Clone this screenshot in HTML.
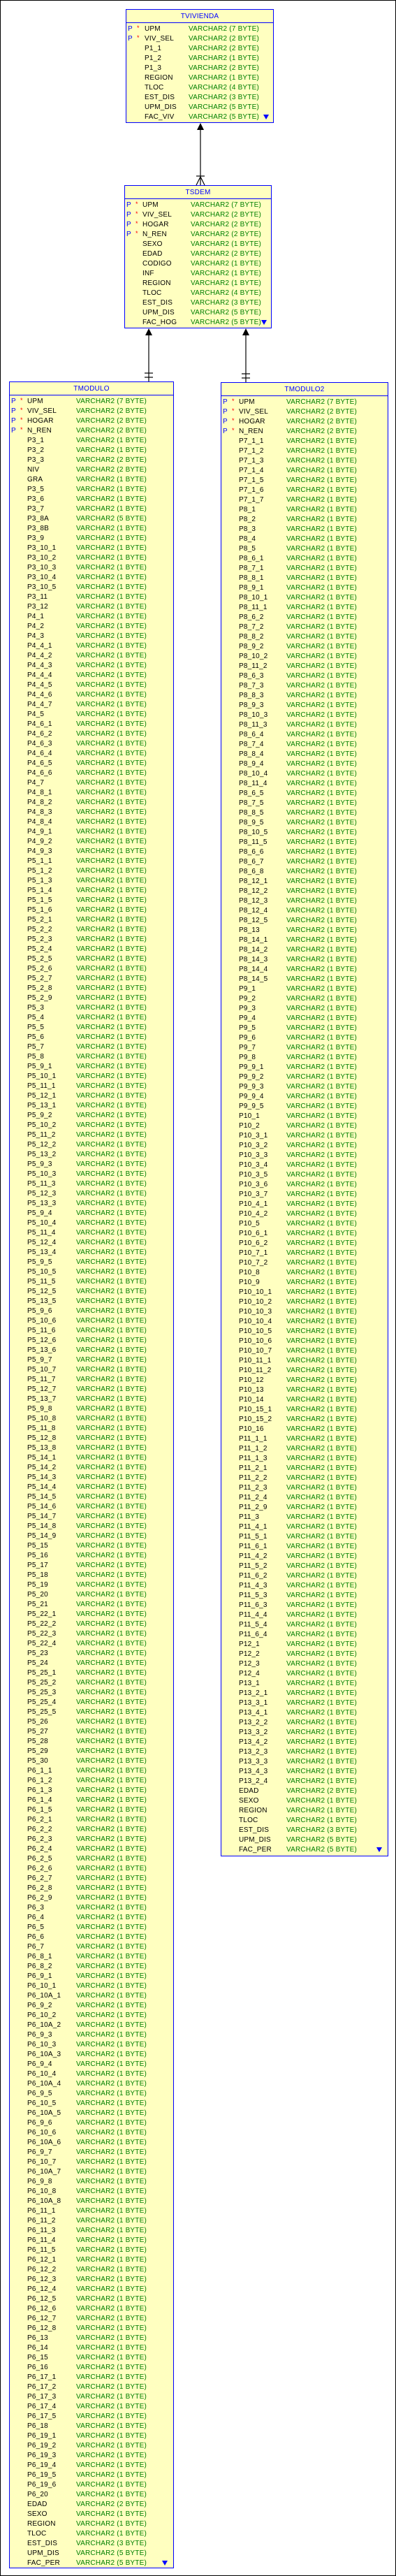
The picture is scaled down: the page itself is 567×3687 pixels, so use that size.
<!DOCTYPE html>
<html><head><meta charset="utf-8">
<style>
html,body{margin:0;padding:0;background:#fff}
body{width:567px;height:3687px;position:relative;overflow:hidden}
.fr{position:absolute;left:0;top:0;width:565px;height:3685px;border:1px solid #000}
.t{position:absolute;background:#ffffc0;border:1px solid #0000ff;font:10px "Liberation Sans",Arial,sans-serif;letter-spacing:.2px;box-sizing:border-box}
.h{height:18px;line-height:19px;text-align:center;color:#0000ff;border-bottom:1px solid #0000ff;margin-bottom:2px}
.t p{margin:0;height:14px;line-height:14px;position:relative;padding-left:25px;color:#008000;white-space:nowrap}
.t p s{text-decoration:none;color:#000;display:inline-block;width:70px}
.t p b{position:absolute;left:2px;top:0;color:#0000ff;font-weight:normal}
.t p i{position:absolute;left:15px;top:-2px;color:#f00;font-style:normal;font-size:9px}
.dn{position:absolute;right:6px;bottom:4px;width:0;height:0;border-left:4px solid transparent;border-right:4px solid transparent;border-top:7px solid #0000ff}
#tv p{padding-left:26px}#tv p s{width:63px}
#ts p s{width:69px}
#m2 p s{width:68px}
svg{position:absolute;left:0;top:0}
</style></head><body>
<div class="fr"></div>
<svg width="567" height="3687" viewBox="0 0 567 3687">
<g stroke="#000" stroke-width="1.2" fill="none">
<line x1="287" y1="180" x2="287" y2="265"/>
<line x1="281" y1="252" x2="293" y2="252"/>
<line x1="287" y1="253" x2="281" y2="265"/>
<line x1="287" y1="253" x2="293" y2="265"/>
<line x1="213" y1="474" x2="213" y2="546"/>
<line x1="207" y1="534" x2="219" y2="534"/>
<line x1="207" y1="540" x2="219" y2="540"/>
<line x1="352" y1="474" x2="352" y2="547"/>
<line x1="346" y1="535" x2="358" y2="535"/>
<line x1="346" y1="541" x2="358" y2="541"/>
</g>
<g fill="#000">
<polygon points="287,176 282,186 292,186"/>
<polygon points="213,470 208,480 218,480"/>
<polygon points="352,470 347,480 357,480"/>
</g>
</svg>

<div class="t" id="tv" style="left:180px;top:13px;width:212px;height:163px">
<div class="h">TVIVIENDA</div>
<p><b>P</b><i>*</i><s>UPM</s>VARCHAR2 (7 BYTE)</p>
<p><b>P</b><i>*</i><s>VIV_SEL</s>VARCHAR2 (2 BYTE)</p>
<p><s>P1_1</s>VARCHAR2 (2 BYTE)</p>
<p><s>P1_2</s>VARCHAR2 (1 BYTE)</p>
<p><s>P1_3</s>VARCHAR2 (2 BYTE)</p>
<p><s>REGION</s>VARCHAR2 (1 BYTE)</p>
<p><s>TLOC</s>VARCHAR2 (4 BYTE)</p>
<p><s>EST_DIS</s>VARCHAR2 (3 BYTE)</p>
<p><s>UPM_DIS</s>VARCHAR2 (5 BYTE)</p>
<p><s>FAC_VIV</s>VARCHAR2 (5 BYTE)</p>
<div class="dn"></div>
</div>

<div class="t" id="ts" style="left:178px;top:265px;width:211px;height:205px">
<div class="h">TSDEM</div>
<p><b>P</b><i>*</i><s>UPM</s>VARCHAR2 (7 BYTE)</p>
<p><b>P</b><i>*</i><s>VIV_SEL</s>VARCHAR2 (2 BYTE)</p>
<p><b>P</b><i>*</i><s>HOGAR</s>VARCHAR2 (2 BYTE)</p>
<p><b>P</b><i>*</i><s>N_REN</s>VARCHAR2 (2 BYTE)</p>
<p><s>SEXO</s>VARCHAR2 (1 BYTE)</p>
<p><s>EDAD</s>VARCHAR2 (2 BYTE)</p>
<p><s>CODIGO</s>VARCHAR2 (1 BYTE)</p>
<p><s>INF</s>VARCHAR2 (1 BYTE)</p>
<p><s>REGION</s>VARCHAR2 (1 BYTE)</p>
<p><s>TLOC</s>VARCHAR2 (4 BYTE)</p>
<p><s>EST_DIS</s>VARCHAR2 (3 BYTE)</p>
<p><s>UPM_DIS</s>VARCHAR2 (5 BYTE)</p>
<p><s>FAC_HOG</s>VARCHAR2 (5 BYTE)</p>
<div class="dn"></div>
</div>

<div class="t" id="m1" style="left:13px;top:546px;width:236px;height:3130px">
<div class="h">TMODULO</div>
<p><b>P</b><i>*</i><s>UPM</s>VARCHAR2 (7 BYTE)</p>
<p><b>P</b><i>*</i><s>VIV_SEL</s>VARCHAR2 (2 BYTE)</p>
<p><b>P</b><i>*</i><s>HOGAR</s>VARCHAR2 (2 BYTE)</p>
<p><b>P</b><i>*</i><s>N_REN</s>VARCHAR2 (2 BYTE)</p>
<p><s>P3_1</s>VARCHAR2 (1 BYTE)</p>
<p><s>P3_2</s>VARCHAR2 (1 BYTE)</p>
<p><s>P3_3</s>VARCHAR2 (2 BYTE)</p>
<p><s>NIV</s>VARCHAR2 (2 BYTE)</p>
<p><s>GRA</s>VARCHAR2 (1 BYTE)</p>
<p><s>P3_5</s>VARCHAR2 (1 BYTE)</p>
<p><s>P3_6</s>VARCHAR2 (1 BYTE)</p>
<p><s>P3_7</s>VARCHAR2 (1 BYTE)</p>
<p><s>P3_8A</s>VARCHAR2 (5 BYTE)</p>
<p><s>P3_8B</s>VARCHAR2 (1 BYTE)</p>
<p><s>P3_9</s>VARCHAR2 (1 BYTE)</p>
<p><s>P3_10_1</s>VARCHAR2 (1 BYTE)</p>
<p><s>P3_10_2</s>VARCHAR2 (1 BYTE)</p>
<p><s>P3_10_3</s>VARCHAR2 (1 BYTE)</p>
<p><s>P3_10_4</s>VARCHAR2 (1 BYTE)</p>
<p><s>P3_10_5</s>VARCHAR2 (1 BYTE)</p>
<p><s>P3_11</s>VARCHAR2 (1 BYTE)</p>
<p><s>P3_12</s>VARCHAR2 (1 BYTE)</p>
<p><s>P4_1</s>VARCHAR2 (1 BYTE)</p>
<p><s>P4_2</s>VARCHAR2 (1 BYTE)</p>
<p><s>P4_3</s>VARCHAR2 (1 BYTE)</p>
<p><s>P4_4_1</s>VARCHAR2 (1 BYTE)</p>
<p><s>P4_4_2</s>VARCHAR2 (1 BYTE)</p>
<p><s>P4_4_3</s>VARCHAR2 (1 BYTE)</p>
<p><s>P4_4_4</s>VARCHAR2 (1 BYTE)</p>
<p><s>P4_4_5</s>VARCHAR2 (1 BYTE)</p>
<p><s>P4_4_6</s>VARCHAR2 (1 BYTE)</p>
<p><s>P4_4_7</s>VARCHAR2 (1 BYTE)</p>
<p><s>P4_5</s>VARCHAR2 (1 BYTE)</p>
<p><s>P4_6_1</s>VARCHAR2 (1 BYTE)</p>
<p><s>P4_6_2</s>VARCHAR2 (1 BYTE)</p>
<p><s>P4_6_3</s>VARCHAR2 (1 BYTE)</p>
<p><s>P4_6_4</s>VARCHAR2 (1 BYTE)</p>
<p><s>P4_6_5</s>VARCHAR2 (1 BYTE)</p>
<p><s>P4_6_6</s>VARCHAR2 (1 BYTE)</p>
<p><s>P4_7</s>VARCHAR2 (1 BYTE)</p>
<p><s>P4_8_1</s>VARCHAR2 (1 BYTE)</p>
<p><s>P4_8_2</s>VARCHAR2 (1 BYTE)</p>
<p><s>P4_8_3</s>VARCHAR2 (1 BYTE)</p>
<p><s>P4_8_4</s>VARCHAR2 (1 BYTE)</p>
<p><s>P4_9_1</s>VARCHAR2 (1 BYTE)</p>
<p><s>P4_9_2</s>VARCHAR2 (1 BYTE)</p>
<p><s>P4_9_3</s>VARCHAR2 (1 BYTE)</p>
<p><s>P5_1_1</s>VARCHAR2 (1 BYTE)</p>
<p><s>P5_1_2</s>VARCHAR2 (1 BYTE)</p>
<p><s>P5_1_3</s>VARCHAR2 (1 BYTE)</p>
<p><s>P5_1_4</s>VARCHAR2 (1 BYTE)</p>
<p><s>P5_1_5</s>VARCHAR2 (1 BYTE)</p>
<p><s>P5_1_6</s>VARCHAR2 (1 BYTE)</p>
<p><s>P5_2_1</s>VARCHAR2 (1 BYTE)</p>
<p><s>P5_2_2</s>VARCHAR2 (1 BYTE)</p>
<p><s>P5_2_3</s>VARCHAR2 (1 BYTE)</p>
<p><s>P5_2_4</s>VARCHAR2 (1 BYTE)</p>
<p><s>P5_2_5</s>VARCHAR2 (1 BYTE)</p>
<p><s>P5_2_6</s>VARCHAR2 (1 BYTE)</p>
<p><s>P5_2_7</s>VARCHAR2 (1 BYTE)</p>
<p><s>P5_2_8</s>VARCHAR2 (1 BYTE)</p>
<p><s>P5_2_9</s>VARCHAR2 (1 BYTE)</p>
<p><s>P5_3</s>VARCHAR2 (1 BYTE)</p>
<p><s>P5_4</s>VARCHAR2 (1 BYTE)</p>
<p><s>P5_5</s>VARCHAR2 (1 BYTE)</p>
<p><s>P5_6</s>VARCHAR2 (1 BYTE)</p>
<p><s>P5_7</s>VARCHAR2 (1 BYTE)</p>
<p><s>P5_8</s>VARCHAR2 (1 BYTE)</p>
<p><s>P5_9_1</s>VARCHAR2 (1 BYTE)</p>
<p><s>P5_10_1</s>VARCHAR2 (1 BYTE)</p>
<p><s>P5_11_1</s>VARCHAR2 (1 BYTE)</p>
<p><s>P5_12_1</s>VARCHAR2 (1 BYTE)</p>
<p><s>P5_13_1</s>VARCHAR2 (1 BYTE)</p>
<p><s>P5_9_2</s>VARCHAR2 (1 BYTE)</p>
<p><s>P5_10_2</s>VARCHAR2 (1 BYTE)</p>
<p><s>P5_11_2</s>VARCHAR2 (1 BYTE)</p>
<p><s>P5_12_2</s>VARCHAR2 (1 BYTE)</p>
<p><s>P5_13_2</s>VARCHAR2 (1 BYTE)</p>
<p><s>P5_9_3</s>VARCHAR2 (1 BYTE)</p>
<p><s>P5_10_3</s>VARCHAR2 (1 BYTE)</p>
<p><s>P5_11_3</s>VARCHAR2 (1 BYTE)</p>
<p><s>P5_12_3</s>VARCHAR2 (1 BYTE)</p>
<p><s>P5_13_3</s>VARCHAR2 (1 BYTE)</p>
<p><s>P5_9_4</s>VARCHAR2 (1 BYTE)</p>
<p><s>P5_10_4</s>VARCHAR2 (1 BYTE)</p>
<p><s>P5_11_4</s>VARCHAR2 (1 BYTE)</p>
<p><s>P5_12_4</s>VARCHAR2 (1 BYTE)</p>
<p><s>P5_13_4</s>VARCHAR2 (1 BYTE)</p>
<p><s>P5_9_5</s>VARCHAR2 (1 BYTE)</p>
<p><s>P5_10_5</s>VARCHAR2 (1 BYTE)</p>
<p><s>P5_11_5</s>VARCHAR2 (1 BYTE)</p>
<p><s>P5_12_5</s>VARCHAR2 (1 BYTE)</p>
<p><s>P5_13_5</s>VARCHAR2 (1 BYTE)</p>
<p><s>P5_9_6</s>VARCHAR2 (1 BYTE)</p>
<p><s>P5_10_6</s>VARCHAR2 (1 BYTE)</p>
<p><s>P5_11_6</s>VARCHAR2 (1 BYTE)</p>
<p><s>P5_12_6</s>VARCHAR2 (1 BYTE)</p>
<p><s>P5_13_6</s>VARCHAR2 (1 BYTE)</p>
<p><s>P5_9_7</s>VARCHAR2 (1 BYTE)</p>
<p><s>P5_10_7</s>VARCHAR2 (1 BYTE)</p>
<p><s>P5_11_7</s>VARCHAR2 (1 BYTE)</p>
<p><s>P5_12_7</s>VARCHAR2 (1 BYTE)</p>
<p><s>P5_13_7</s>VARCHAR2 (1 BYTE)</p>
<p><s>P5_9_8</s>VARCHAR2 (1 BYTE)</p>
<p><s>P5_10_8</s>VARCHAR2 (1 BYTE)</p>
<p><s>P5_11_8</s>VARCHAR2 (1 BYTE)</p>
<p><s>P5_12_8</s>VARCHAR2 (1 BYTE)</p>
<p><s>P5_13_8</s>VARCHAR2 (1 BYTE)</p>
<p><s>P5_14_1</s>VARCHAR2 (1 BYTE)</p>
<p><s>P5_14_2</s>VARCHAR2 (1 BYTE)</p>
<p><s>P5_14_3</s>VARCHAR2 (1 BYTE)</p>
<p><s>P5_14_4</s>VARCHAR2 (1 BYTE)</p>
<p><s>P5_14_5</s>VARCHAR2 (1 BYTE)</p>
<p><s>P5_14_6</s>VARCHAR2 (1 BYTE)</p>
<p><s>P5_14_7</s>VARCHAR2 (1 BYTE)</p>
<p><s>P5_14_8</s>VARCHAR2 (1 BYTE)</p>
<p><s>P5_14_9</s>VARCHAR2 (1 BYTE)</p>
<p><s>P5_15</s>VARCHAR2 (1 BYTE)</p>
<p><s>P5_16</s>VARCHAR2 (1 BYTE)</p>
<p><s>P5_17</s>VARCHAR2 (1 BYTE)</p>
<p><s>P5_18</s>VARCHAR2 (1 BYTE)</p>
<p><s>P5_19</s>VARCHAR2 (1 BYTE)</p>
<p><s>P5_20</s>VARCHAR2 (1 BYTE)</p>
<p><s>P5_21</s>VARCHAR2 (1 BYTE)</p>
<p><s>P5_22_1</s>VARCHAR2 (1 BYTE)</p>
<p><s>P5_22_2</s>VARCHAR2 (1 BYTE)</p>
<p><s>P5_22_3</s>VARCHAR2 (1 BYTE)</p>
<p><s>P5_22_4</s>VARCHAR2 (1 BYTE)</p>
<p><s>P5_23</s>VARCHAR2 (1 BYTE)</p>
<p><s>P5_24</s>VARCHAR2 (1 BYTE)</p>
<p><s>P5_25_1</s>VARCHAR2 (1 BYTE)</p>
<p><s>P5_25_2</s>VARCHAR2 (1 BYTE)</p>
<p><s>P5_25_3</s>VARCHAR2 (1 BYTE)</p>
<p><s>P5_25_4</s>VARCHAR2 (1 BYTE)</p>
<p><s>P5_25_5</s>VARCHAR2 (1 BYTE)</p>
<p><s>P5_26</s>VARCHAR2 (1 BYTE)</p>
<p><s>P5_27</s>VARCHAR2 (1 BYTE)</p>
<p><s>P5_28</s>VARCHAR2 (1 BYTE)</p>
<p><s>P5_29</s>VARCHAR2 (1 BYTE)</p>
<p><s>P5_30</s>VARCHAR2 (1 BYTE)</p>
<p><s>P6_1_1</s>VARCHAR2 (1 BYTE)</p>
<p><s>P6_1_2</s>VARCHAR2 (1 BYTE)</p>
<p><s>P6_1_3</s>VARCHAR2 (1 BYTE)</p>
<p><s>P6_1_4</s>VARCHAR2 (1 BYTE)</p>
<p><s>P6_1_5</s>VARCHAR2 (1 BYTE)</p>
<p><s>P6_2_1</s>VARCHAR2 (1 BYTE)</p>
<p><s>P6_2_2</s>VARCHAR2 (1 BYTE)</p>
<p><s>P6_2_3</s>VARCHAR2 (1 BYTE)</p>
<p><s>P6_2_4</s>VARCHAR2 (1 BYTE)</p>
<p><s>P6_2_5</s>VARCHAR2 (1 BYTE)</p>
<p><s>P6_2_6</s>VARCHAR2 (1 BYTE)</p>
<p><s>P6_2_7</s>VARCHAR2 (1 BYTE)</p>
<p><s>P6_2_8</s>VARCHAR2 (1 BYTE)</p>
<p><s>P6_2_9</s>VARCHAR2 (1 BYTE)</p>
<p><s>P6_3</s>VARCHAR2 (1 BYTE)</p>
<p><s>P6_4</s>VARCHAR2 (1 BYTE)</p>
<p><s>P6_5</s>VARCHAR2 (1 BYTE)</p>
<p><s>P6_6</s>VARCHAR2 (1 BYTE)</p>
<p><s>P6_7</s>VARCHAR2 (1 BYTE)</p>
<p><s>P6_8_1</s>VARCHAR2 (1 BYTE)</p>
<p><s>P6_8_2</s>VARCHAR2 (1 BYTE)</p>
<p><s>P6_9_1</s>VARCHAR2 (1 BYTE)</p>
<p><s>P6_10_1</s>VARCHAR2 (1 BYTE)</p>
<p><s>P6_10A_1</s>VARCHAR2 (1 BYTE)</p>
<p><s>P6_9_2</s>VARCHAR2 (1 BYTE)</p>
<p><s>P6_10_2</s>VARCHAR2 (1 BYTE)</p>
<p><s>P6_10A_2</s>VARCHAR2 (1 BYTE)</p>
<p><s>P6_9_3</s>VARCHAR2 (1 BYTE)</p>
<p><s>P6_10_3</s>VARCHAR2 (1 BYTE)</p>
<p><s>P6_10A_3</s>VARCHAR2 (1 BYTE)</p>
<p><s>P6_9_4</s>VARCHAR2 (1 BYTE)</p>
<p><s>P6_10_4</s>VARCHAR2 (1 BYTE)</p>
<p><s>P6_10A_4</s>VARCHAR2 (1 BYTE)</p>
<p><s>P6_9_5</s>VARCHAR2 (1 BYTE)</p>
<p><s>P6_10_5</s>VARCHAR2 (1 BYTE)</p>
<p><s>P6_10A_5</s>VARCHAR2 (1 BYTE)</p>
<p><s>P6_9_6</s>VARCHAR2 (1 BYTE)</p>
<p><s>P6_10_6</s>VARCHAR2 (1 BYTE)</p>
<p><s>P6_10A_6</s>VARCHAR2 (1 BYTE)</p>
<p><s>P6_9_7</s>VARCHAR2 (1 BYTE)</p>
<p><s>P6_10_7</s>VARCHAR2 (1 BYTE)</p>
<p><s>P6_10A_7</s>VARCHAR2 (1 BYTE)</p>
<p><s>P6_9_8</s>VARCHAR2 (1 BYTE)</p>
<p><s>P6_10_8</s>VARCHAR2 (1 BYTE)</p>
<p><s>P6_10A_8</s>VARCHAR2 (1 BYTE)</p>
<p><s>P6_11_1</s>VARCHAR2 (1 BYTE)</p>
<p><s>P6_11_2</s>VARCHAR2 (1 BYTE)</p>
<p><s>P6_11_3</s>VARCHAR2 (1 BYTE)</p>
<p><s>P6_11_4</s>VARCHAR2 (1 BYTE)</p>
<p><s>P6_11_5</s>VARCHAR2 (1 BYTE)</p>
<p><s>P6_12_1</s>VARCHAR2 (1 BYTE)</p>
<p><s>P6_12_2</s>VARCHAR2 (1 BYTE)</p>
<p><s>P6_12_3</s>VARCHAR2 (1 BYTE)</p>
<p><s>P6_12_4</s>VARCHAR2 (1 BYTE)</p>
<p><s>P6_12_5</s>VARCHAR2 (1 BYTE)</p>
<p><s>P6_12_6</s>VARCHAR2 (1 BYTE)</p>
<p><s>P6_12_7</s>VARCHAR2 (1 BYTE)</p>
<p><s>P6_12_8</s>VARCHAR2 (1 BYTE)</p>
<p><s>P6_13</s>VARCHAR2 (1 BYTE)</p>
<p><s>P6_14</s>VARCHAR2 (1 BYTE)</p>
<p><s>P6_15</s>VARCHAR2 (1 BYTE)</p>
<p><s>P6_16</s>VARCHAR2 (1 BYTE)</p>
<p><s>P6_17_1</s>VARCHAR2 (1 BYTE)</p>
<p><s>P6_17_2</s>VARCHAR2 (1 BYTE)</p>
<p><s>P6_17_3</s>VARCHAR2 (1 BYTE)</p>
<p><s>P6_17_4</s>VARCHAR2 (1 BYTE)</p>
<p><s>P6_17_5</s>VARCHAR2 (1 BYTE)</p>
<p><s>P6_18</s>VARCHAR2 (1 BYTE)</p>
<p><s>P6_19_1</s>VARCHAR2 (1 BYTE)</p>
<p><s>P6_19_2</s>VARCHAR2 (1 BYTE)</p>
<p><s>P6_19_3</s>VARCHAR2 (1 BYTE)</p>
<p><s>P6_19_4</s>VARCHAR2 (1 BYTE)</p>
<p><s>P6_19_5</s>VARCHAR2 (1 BYTE)</p>
<p><s>P6_19_6</s>VARCHAR2 (1 BYTE)</p>
<p><s>P6_20</s>VARCHAR2 (1 BYTE)</p>
<p><s>EDAD</s>VARCHAR2 (2 BYTE)</p>
<p><s>SEXO</s>VARCHAR2 (1 BYTE)</p>
<p><s>REGION</s>VARCHAR2 (1 BYTE)</p>
<p><s>TLOC</s>VARCHAR2 (1 BYTE)</p>
<p><s>EST_DIS</s>VARCHAR2 (3 BYTE)</p>
<p><s>UPM_DIS</s>VARCHAR2 (5 BYTE)</p>
<p><s>FAC_PER</s>VARCHAR2 (5 BYTE)</p>
<div class="dn" style="bottom:3px;right:8px"></div>
</div>

<div class="t" id="m2" style="left:316px;top:547px;width:240px;height:2110px">
<div class="h">TMODULO2</div>
<p><b>P</b><i>*</i><s>UPM</s>VARCHAR2 (7 BYTE)</p>
<p><b>P</b><i>*</i><s>VIV_SEL</s>VARCHAR2 (2 BYTE)</p>
<p><b>P</b><i>*</i><s>HOGAR</s>VARCHAR2 (2 BYTE)</p>
<p><b>P</b><i>*</i><s>N_REN</s>VARCHAR2 (2 BYTE)</p>
<p><s>P7_1_1</s>VARCHAR2 (1 BYTE)</p>
<p><s>P7_1_2</s>VARCHAR2 (1 BYTE)</p>
<p><s>P7_1_3</s>VARCHAR2 (1 BYTE)</p>
<p><s>P7_1_4</s>VARCHAR2 (1 BYTE)</p>
<p><s>P7_1_5</s>VARCHAR2 (1 BYTE)</p>
<p><s>P7_1_6</s>VARCHAR2 (1 BYTE)</p>
<p><s>P7_1_7</s>VARCHAR2 (1 BYTE)</p>
<p><s>P8_1</s>VARCHAR2 (1 BYTE)</p>
<p><s>P8_2</s>VARCHAR2 (1 BYTE)</p>
<p><s>P8_3</s>VARCHAR2 (1 BYTE)</p>
<p><s>P8_4</s>VARCHAR2 (1 BYTE)</p>
<p><s>P8_5</s>VARCHAR2 (1 BYTE)</p>
<p><s>P8_6_1</s>VARCHAR2 (1 BYTE)</p>
<p><s>P8_7_1</s>VARCHAR2 (1 BYTE)</p>
<p><s>P8_8_1</s>VARCHAR2 (1 BYTE)</p>
<p><s>P8_9_1</s>VARCHAR2 (1 BYTE)</p>
<p><s>P8_10_1</s>VARCHAR2 (1 BYTE)</p>
<p><s>P8_11_1</s>VARCHAR2 (1 BYTE)</p>
<p><s>P8_6_2</s>VARCHAR2 (1 BYTE)</p>
<p><s>P8_7_2</s>VARCHAR2 (1 BYTE)</p>
<p><s>P8_8_2</s>VARCHAR2 (1 BYTE)</p>
<p><s>P8_9_2</s>VARCHAR2 (1 BYTE)</p>
<p><s>P8_10_2</s>VARCHAR2 (1 BYTE)</p>
<p><s>P8_11_2</s>VARCHAR2 (1 BYTE)</p>
<p><s>P8_6_3</s>VARCHAR2 (1 BYTE)</p>
<p><s>P8_7_3</s>VARCHAR2 (1 BYTE)</p>
<p><s>P8_8_3</s>VARCHAR2 (1 BYTE)</p>
<p><s>P8_9_3</s>VARCHAR2 (1 BYTE)</p>
<p><s>P8_10_3</s>VARCHAR2 (1 BYTE)</p>
<p><s>P8_11_3</s>VARCHAR2 (1 BYTE)</p>
<p><s>P8_6_4</s>VARCHAR2 (1 BYTE)</p>
<p><s>P8_7_4</s>VARCHAR2 (1 BYTE)</p>
<p><s>P8_8_4</s>VARCHAR2 (1 BYTE)</p>
<p><s>P8_9_4</s>VARCHAR2 (1 BYTE)</p>
<p><s>P8_10_4</s>VARCHAR2 (1 BYTE)</p>
<p><s>P8_11_4</s>VARCHAR2 (1 BYTE)</p>
<p><s>P8_6_5</s>VARCHAR2 (1 BYTE)</p>
<p><s>P8_7_5</s>VARCHAR2 (1 BYTE)</p>
<p><s>P8_8_5</s>VARCHAR2 (1 BYTE)</p>
<p><s>P8_9_5</s>VARCHAR2 (1 BYTE)</p>
<p><s>P8_10_5</s>VARCHAR2 (1 BYTE)</p>
<p><s>P8_11_5</s>VARCHAR2 (1 BYTE)</p>
<p><s>P8_6_6</s>VARCHAR2 (1 BYTE)</p>
<p><s>P8_6_7</s>VARCHAR2 (1 BYTE)</p>
<p><s>P8_6_8</s>VARCHAR2 (1 BYTE)</p>
<p><s>P8_12_1</s>VARCHAR2 (1 BYTE)</p>
<p><s>P8_12_2</s>VARCHAR2 (1 BYTE)</p>
<p><s>P8_12_3</s>VARCHAR2 (1 BYTE)</p>
<p><s>P8_12_4</s>VARCHAR2 (1 BYTE)</p>
<p><s>P8_12_5</s>VARCHAR2 (1 BYTE)</p>
<p><s>P8_13</s>VARCHAR2 (1 BYTE)</p>
<p><s>P8_14_1</s>VARCHAR2 (1 BYTE)</p>
<p><s>P8_14_2</s>VARCHAR2 (1 BYTE)</p>
<p><s>P8_14_3</s>VARCHAR2 (1 BYTE)</p>
<p><s>P8_14_4</s>VARCHAR2 (1 BYTE)</p>
<p><s>P8_14_5</s>VARCHAR2 (1 BYTE)</p>
<p><s>P9_1</s>VARCHAR2 (1 BYTE)</p>
<p><s>P9_2</s>VARCHAR2 (1 BYTE)</p>
<p><s>P9_3</s>VARCHAR2 (1 BYTE)</p>
<p><s>P9_4</s>VARCHAR2 (1 BYTE)</p>
<p><s>P9_5</s>VARCHAR2 (1 BYTE)</p>
<p><s>P9_6</s>VARCHAR2 (1 BYTE)</p>
<p><s>P9_7</s>VARCHAR2 (1 BYTE)</p>
<p><s>P9_8</s>VARCHAR2 (1 BYTE)</p>
<p><s>P9_9_1</s>VARCHAR2 (1 BYTE)</p>
<p><s>P9_9_2</s>VARCHAR2 (1 BYTE)</p>
<p><s>P9_9_3</s>VARCHAR2 (1 BYTE)</p>
<p><s>P9_9_4</s>VARCHAR2 (1 BYTE)</p>
<p><s>P9_9_5</s>VARCHAR2 (1 BYTE)</p>
<p><s>P10_1</s>VARCHAR2 (1 BYTE)</p>
<p><s>P10_2</s>VARCHAR2 (1 BYTE)</p>
<p><s>P10_3_1</s>VARCHAR2 (1 BYTE)</p>
<p><s>P10_3_2</s>VARCHAR2 (1 BYTE)</p>
<p><s>P10_3_3</s>VARCHAR2 (1 BYTE)</p>
<p><s>P10_3_4</s>VARCHAR2 (1 BYTE)</p>
<p><s>P10_3_5</s>VARCHAR2 (1 BYTE)</p>
<p><s>P10_3_6</s>VARCHAR2 (1 BYTE)</p>
<p><s>P10_3_7</s>VARCHAR2 (1 BYTE)</p>
<p><s>P10_4_1</s>VARCHAR2 (1 BYTE)</p>
<p><s>P10_4_2</s>VARCHAR2 (1 BYTE)</p>
<p><s>P10_5</s>VARCHAR2 (1 BYTE)</p>
<p><s>P10_6_1</s>VARCHAR2 (1 BYTE)</p>
<p><s>P10_6_2</s>VARCHAR2 (1 BYTE)</p>
<p><s>P10_7_1</s>VARCHAR2 (1 BYTE)</p>
<p><s>P10_7_2</s>VARCHAR2 (1 BYTE)</p>
<p><s>P10_8</s>VARCHAR2 (1 BYTE)</p>
<p><s>P10_9</s>VARCHAR2 (1 BYTE)</p>
<p><s>P10_10_1</s>VARCHAR2 (1 BYTE)</p>
<p><s>P10_10_2</s>VARCHAR2 (1 BYTE)</p>
<p><s>P10_10_3</s>VARCHAR2 (1 BYTE)</p>
<p><s>P10_10_4</s>VARCHAR2 (1 BYTE)</p>
<p><s>P10_10_5</s>VARCHAR2 (1 BYTE)</p>
<p><s>P10_10_6</s>VARCHAR2 (1 BYTE)</p>
<p><s>P10_10_7</s>VARCHAR2 (1 BYTE)</p>
<p><s>P10_11_1</s>VARCHAR2 (1 BYTE)</p>
<p><s>P10_11_2</s>VARCHAR2 (1 BYTE)</p>
<p><s>P10_12</s>VARCHAR2 (1 BYTE)</p>
<p><s>P10_13</s>VARCHAR2 (1 BYTE)</p>
<p><s>P10_14</s>VARCHAR2 (1 BYTE)</p>
<p><s>P10_15_1</s>VARCHAR2 (1 BYTE)</p>
<p><s>P10_15_2</s>VARCHAR2 (1 BYTE)</p>
<p><s>P10_16</s>VARCHAR2 (1 BYTE)</p>
<p><s>P11_1_1</s>VARCHAR2 (1 BYTE)</p>
<p><s>P11_1_2</s>VARCHAR2 (1 BYTE)</p>
<p><s>P11_1_3</s>VARCHAR2 (1 BYTE)</p>
<p><s>P11_2_1</s>VARCHAR2 (1 BYTE)</p>
<p><s>P11_2_2</s>VARCHAR2 (1 BYTE)</p>
<p><s>P11_2_3</s>VARCHAR2 (1 BYTE)</p>
<p><s>P11_2_4</s>VARCHAR2 (1 BYTE)</p>
<p><s>P11_2_9</s>VARCHAR2 (1 BYTE)</p>
<p><s>P11_3</s>VARCHAR2 (1 BYTE)</p>
<p><s>P11_4_1</s>VARCHAR2 (1 BYTE)</p>
<p><s>P11_5_1</s>VARCHAR2 (1 BYTE)</p>
<p><s>P11_6_1</s>VARCHAR2 (1 BYTE)</p>
<p><s>P11_4_2</s>VARCHAR2 (1 BYTE)</p>
<p><s>P11_5_2</s>VARCHAR2 (1 BYTE)</p>
<p><s>P11_6_2</s>VARCHAR2 (1 BYTE)</p>
<p><s>P11_4_3</s>VARCHAR2 (1 BYTE)</p>
<p><s>P11_5_3</s>VARCHAR2 (1 BYTE)</p>
<p><s>P11_6_3</s>VARCHAR2 (1 BYTE)</p>
<p><s>P11_4_4</s>VARCHAR2 (1 BYTE)</p>
<p><s>P11_5_4</s>VARCHAR2 (1 BYTE)</p>
<p><s>P11_6_4</s>VARCHAR2 (1 BYTE)</p>
<p><s>P12_1</s>VARCHAR2 (1 BYTE)</p>
<p><s>P12_2</s>VARCHAR2 (1 BYTE)</p>
<p><s>P12_3</s>VARCHAR2 (1 BYTE)</p>
<p><s>P12_4</s>VARCHAR2 (1 BYTE)</p>
<p><s>P13_1</s>VARCHAR2 (1 BYTE)</p>
<p><s>P13_2_1</s>VARCHAR2 (1 BYTE)</p>
<p><s>P13_3_1</s>VARCHAR2 (1 BYTE)</p>
<p><s>P13_4_1</s>VARCHAR2 (1 BYTE)</p>
<p><s>P13_2_2</s>VARCHAR2 (1 BYTE)</p>
<p><s>P13_3_2</s>VARCHAR2 (1 BYTE)</p>
<p><s>P13_4_2</s>VARCHAR2 (1 BYTE)</p>
<p><s>P13_2_3</s>VARCHAR2 (1 BYTE)</p>
<p><s>P13_3_3</s>VARCHAR2 (1 BYTE)</p>
<p><s>P13_4_3</s>VARCHAR2 (1 BYTE)</p>
<p><s>P13_2_4</s>VARCHAR2 (1 BYTE)</p>
<p><s>EDAD</s>VARCHAR2 (2 BYTE)</p>
<p><s>SEXO</s>VARCHAR2 (1 BYTE)</p>
<p><s>REGION</s>VARCHAR2 (1 BYTE)</p>
<p><s>TLOC</s>VARCHAR2 (1 BYTE)</p>
<p><s>EST_DIS</s>VARCHAR2 (3 BYTE)</p>
<p><s>UPM_DIS</s>VARCHAR2 (5 BYTE)</p>
<p><s>FAC_PER</s>VARCHAR2 (5 BYTE)</p>
<div class="dn" style="bottom:5px;right:8px"></div>
</div>
</body></html>
